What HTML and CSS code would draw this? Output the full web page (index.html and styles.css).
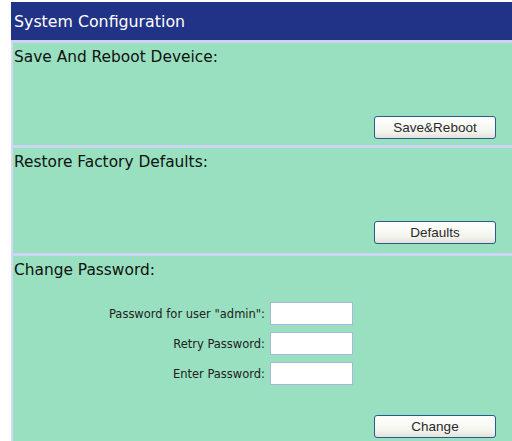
FILE: index.html
```html
<!DOCTYPE html>
<html>
<head>
<meta charset="utf-8">
<link rel="stylesheet" href="styles.css">
</head>
<body>
<div class="panel">
  <div class="header">System Configuration</div>
  <div class="section sec-reboot">
    <div class="title">Save And Reboot Deveice:</div>
    <div class="actions"><button class="btn">Save&amp;Reboot</button></div>
  </div>
  <div class="section sec-defaults">
    <div class="title">Restore Factory Defaults:</div>
    <div class="actions"><button class="btn">Defaults</button></div>
  </div>
  <div class="section sec-password">
    <div class="title">Change Password:</div>
    <div class="form">
      <label class="lbl">Password for user "admin":</label><input class="field" type="password">
      <label class="lbl">Retry Password:</label><input class="field" type="password">
      <label class="lbl">Enter Password:</label><input class="field" type="password">
    </div>
    <div class="actions"><button class="btn">Change</button></div>
  </div>
</div>
</body>
</html>
```
FILE: styles.css
```css
html, body {
  margin: 0;
  padding: 0;
  background: #ffffff;
}

.panel {
  margin: 2px 0 0 11px;
  font-family: "DejaVu Sans", Verdana, sans-serif;
}

.header {
  height: 41px;
  box-sizing: border-box;
  padding: 1px 0 0 3px;
  background: #213387;
  color: #ffffff;
  font-size: 15.8px;
  display: flex;
  align-items: center;
  border-bottom: 3px solid #cdd3ef;
}

.section {
  background: #98e0bf;
  border-left: 2px solid #d4d8f4;
  padding-left: 1px;
  display: flex;
  flex-direction: column;
}

.section + .section {
  border-top: 3px solid #cdd6f0;
}

.title {
  font-size: 15.4px;
  color: #111111;
  padding-top: 3px;
  height: 22px;
  line-height: 22px;
}

.sec-reboot { height: 102px; }
.sec-defaults { height: 105px; }
.sec-password { height: 188px; }

.actions {
  margin-top: auto;
  display: flex;
  justify-content: flex-end;
  padding-right: 16px;
  padding-bottom: 6px;
}

.sec-defaults .actions {
  padding-bottom: 9px;
}

.btn {
  width: 122px;
  height: 23px;
  font-family: "Liberation Sans", Arial, sans-serif;
  font-size: 13.5px;
  font-weight: normal;
  color: #2a2a2a;
  background: linear-gradient(#ffffff, #f4f4ee 70%, #e2e2da);
  border: 1px solid #2c5a8c;
  border-radius: 3px;
  padding: 0;
}

.form {
  display: grid;
  grid-template-columns: 251px 83px;
  column-gap: 5px;
  row-gap: 7px;
  align-items: center;
  margin-top: 21px;
}

.lbl {
  text-align: right;
  font-size: 11.5px;
  color: #222222;
}

.field {
  box-sizing: border-box;
  width: 83px;
  height: 23px;
  border: 1px solid #a4b8d8;
  background: #ffffff;
  margin: 0;
  padding: 0;
}
```
